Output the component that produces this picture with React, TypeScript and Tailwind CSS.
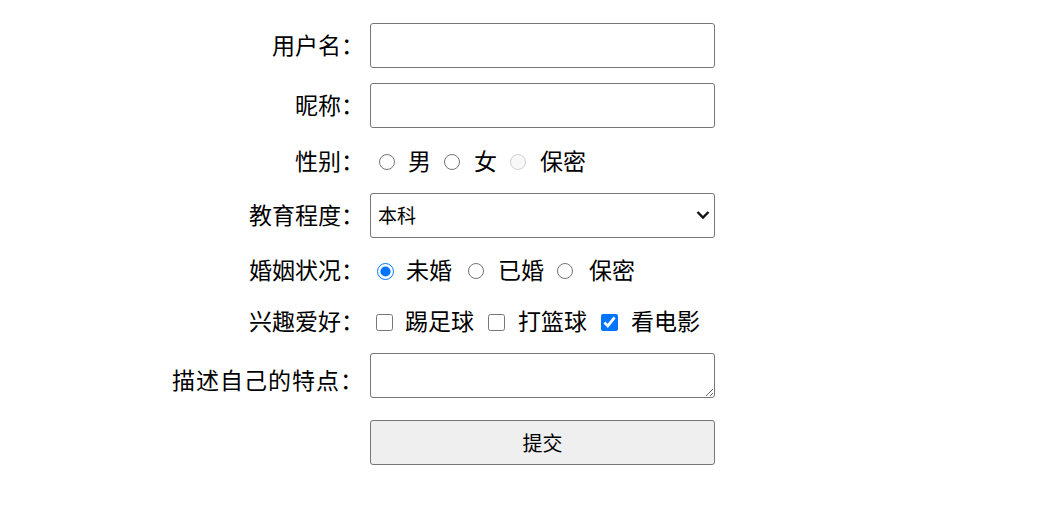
import { useState } from "react";

const labelCls = "text-right text-[23px] leading-[30px] text-black pr-[6px] pb-[4px]";
const boxCls =
  "w-[345px] h-[45px] border border-[#767676] rounded-[3px] bg-white";
const optCls = "pb-[4px]";

export default function App() {
  const [marriage, setMarriage] = useState("single");
  const [edu, setEdu] = useState("本科");

  return (
    <div
      className="w-[1049px] h-[512px] bg-white text-black"
      style={{ fontFamily: '"Noto Sans CJK SC", "Microsoft YaHei", sans-serif' }}
    >
      <form className="ml-[160px] flex flex-col" onSubmit={(e) => e.preventDefault()}>
        {/* 用户名 */}
        <div className="mt-[23px] flex items-center">
          <label className={`w-[210px] ${labelCls}`}>用户名：</label>
          <input type="text" className={`${boxCls} px-2 text-[20px] outline-none`} />
        </div>

        {/* 昵称 */}
        <div className="mt-[15px] flex items-center">
          <label className={`w-[210px] ${labelCls}`}>昵称：</label>
          <input type="text" className={`${boxCls} px-2 text-[20px] outline-none`} />
        </div>

        {/* 性别 */}
        <div className="mt-[19px] flex h-[30px] items-center">
          <label className={`w-[210px] ${labelCls}`}>性别：</label>
          <div className="flex items-center text-[23px] leading-[30px]">
            <input type="radio" name="sex" className="ml-[9px] size-[16px]" />
            <span className={`ml-[13px] ${optCls}`}>男</span>
            <input type="radio" name="sex" className="ml-[13px] size-[16px]" />
            <span className={`ml-[14px] ${optCls}`}>女</span>
            <input type="radio" name="sex" disabled className="ml-[13px] size-[16px]" />
            <span className={`ml-[14px] ${optCls}`}>保密</span>
          </div>
        </div>

        {/* 教育程度 */}
        <div className="mt-[16px] flex items-center">
          <label className={`w-[210px] ${labelCls}`}>教育程度：</label>
          <div className="relative">
            <select
              value={edu}
              onChange={(e) => setEdu(e.target.value)}
              className={`${boxCls} appearance-none pl-[7px] pr-8 text-[19px] outline-none`}
            >
              <option>本科</option>
              <option>专科</option>
              <option>硕士</option>
              <option>博士</option>
            </select>
            <svg
              className="pointer-events-none absolute right-[4px] top-[15px]"
              width="16"
              height="14"
              viewBox="0 0 16 14"
              fill="none"
            >
              <path d="M2.5 4 L8 9.5 L13.5 4" stroke="#111" strokeWidth="2.4" />
            </svg>
          </div>
        </div>

        {/* 婚姻状况 */}
        <div className="mt-[18px] flex h-[30px] items-center">
          <label className={`w-[210px] ${labelCls}`}>婚姻状况：</label>
          <div className="flex items-center text-[23px] leading-[30px]">
            <input
              type="radio"
              name="marriage"
              checked={marriage === "single"}
              onChange={() => setMarriage("single")}
              className="ml-[7px] size-[17px]"
            />
            <span className={`ml-[12px] ${optCls}`}>未婚</span>
            <input
              type="radio"
              name="marriage"
              checked={marriage === "married"}
              onChange={() => setMarriage("married")}
              className="ml-[16px] size-[16px]"
            />
            <span className={`ml-[14px] ${optCls}`}>已婚</span>
            <input
              type="radio"
              name="marriage"
              checked={marriage === "secret"}
              onChange={() => setMarriage("secret")}
              className="ml-[13px] size-[16px]"
            />
            <span className={`ml-[16px] ${optCls}`}>保密</span>
          </div>
        </div>

        {/* 兴趣爱好 */}
        <div className="mt-[21px] flex h-[30px] items-center">
          <label className={`w-[210px] ${labelCls}`}>兴趣爱好：</label>
          <div className="flex items-center text-[23px] leading-[30px]">
            <input type="checkbox" className="ml-[6px] size-[17px]" />
            <span className={`ml-[12px] ${optCls}`}>踢足球</span>
            <input type="checkbox" className="ml-[14px] size-[17px]" />
            <span className={`ml-[13px] ${optCls}`}>打篮球</span>
            <input type="checkbox" defaultChecked className="ml-[14px] size-[17px]" />
            <span className={`ml-[13px] ${optCls}`}>看电影</span>
          </div>
        </div>

        {/* 描述自己的特点 */}
        <div className="mt-[16px] flex items-center">
          <label className={`w-[210px] ${labelCls} pt-[10px] tracking-[1px]`}>描述自己的特点：</label>
          <textarea className={`${boxCls} px-1 text-[16px] outline-none`} />
        </div>

        {/* 提交 */}
        <div className="mt-[22px] flex items-center">
          <div className="w-[210px]" />
          <button
            type="submit"
            className="w-[345px] h-[45px] rounded-[3px] border border-[#767676] bg-[#efefef] text-[20px]"
          >
            提交
          </button>
        </div>
      </form>
    </div>
  );
}
